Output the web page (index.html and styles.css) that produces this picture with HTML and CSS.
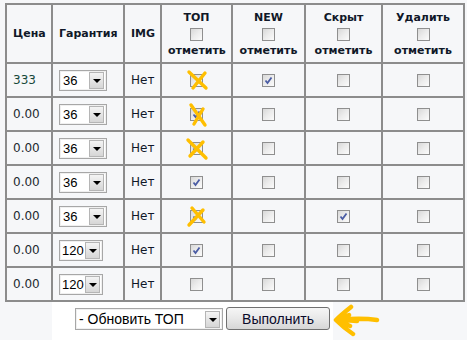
FILE: index.html
```html
<!DOCTYPE html>
<html lang="ru">
<head>
    <meta charset="UTF-8">
    <title>Товары</title>
    <link rel="stylesheet" href="styles.css">
</head>
<body>
    <table class="grid">
        <colgroup>
            <col style="width: 46px">
            <col style="width: 72px">
            <col style="width: 37px">
            <col style="width: 71px">
            <col style="width: 73px">
            <col style="width: 77px">
            <col style="width: 82px">
        </colgroup>
        <thead>
            <tr>
                <th class="left">Цена</th>
                <th class="left">Гарантия</th>
                <th>IMG</th>
                <th><div class="cap">ТОП</div><span class="cb"></span><div class="cap">отметить</div></th>
                <th><div class="cap">NEW</div><span class="cb"></span><div class="cap">отметить</div></th>
                <th><div class="cap">Скрыт</div><span class="cb"></span><div class="cap">отметить</div></th>
                <th><div class="cap">Удалить</div><span class="cb"></span><div class="cap">отметить</div></th>
            </tr>
        </thead>
        <tbody>
            <tr>
                <td class="price first">333</td>
                <td><span class="sel w36"><span class="val">36</span><span class="drop"></span></span></td>
                <td class="mid">Нет</td>
                <td class="mid"><span class="cb"><svg class="cross" viewBox="0 0 24 24"><path d="M3 3 L20 19 M19 4 L7 19"/></svg></span></td>
                <td class="mid"><span class="cb on"><svg class="tick" viewBox="0 0 13 13"><path d="M3.5 6.5 L5.5 9 L9.5 3.5"/></svg></span></td>
                <td class="mid"><span class="cb"></span></td>
                <td class="mid"><span class="cb"></span></td>
            </tr>
            <tr>
                <td class="price">0.00</td>
                <td><span class="sel w36"><span class="val">36</span><span class="drop"></span></span></td>
                <td class="mid">Нет</td>
                <td class="mid"><span class="cb on"><svg class="tick" viewBox="0 0 13 13"><path d="M3.5 6.5 L5.5 9 L9.5 3.5"/></svg><svg class="cross" viewBox="0 0 24 24"><path d="M5 2 L19 22 M17 6 L8 21"/></svg></span></td>
                <td class="mid"><span class="cb"></span></td>
                <td class="mid"><span class="cb"></span></td>
                <td class="mid"><span class="cb"></span></td>
            </tr>
            <tr>
                <td class="price">0.00</td>
                <td><span class="sel w36"><span class="val">36</span><span class="drop"></span></span></td>
                <td class="mid">Нет</td>
                <td class="mid"><span class="cb on"><svg class="tick" viewBox="0 0 13 13"><path d="M3.5 6.5 L5.5 9 L9.5 3.5"/></svg><svg class="cross" viewBox="0 0 24 24"><path d="M2 3 L20 21 M17 5 L4 19"/></svg></span></td>
                <td class="mid"><span class="cb"></span></td>
                <td class="mid"><span class="cb"></span></td>
                <td class="mid"><span class="cb"></span></td>
            </tr>
            <tr>
                <td class="price">0.00</td>
                <td><span class="sel w36"><span class="val">36</span><span class="drop"></span></span></td>
                <td class="mid">Нет</td>
                <td class="mid"><span class="cb on"><svg class="tick" viewBox="0 0 13 13"><path d="M3.5 6.5 L5.5 9 L9.5 3.5"/></svg></span></td>
                <td class="mid"><span class="cb"></span></td>
                <td class="mid"><span class="cb"></span></td>
                <td class="mid"><span class="cb"></span></td>
            </tr>
            <tr>
                <td class="price">0.00</td>
                <td><span class="sel w36"><span class="val">36</span><span class="drop"></span></span></td>
                <td class="mid">Нет</td>
                <td class="mid"><span class="cb on"><svg class="tick" viewBox="0 0 13 13"><path d="M3.5 6.5 L5.5 9 L9.5 3.5"/></svg><svg class="cross" viewBox="0 0 24 24"><path d="M6 3 L18 17 M17 5 L3 20"/></svg></span></td>
                <td class="mid"><span class="cb"></span></td>
                <td class="mid"><span class="cb on"><svg class="tick" viewBox="0 0 13 13"><path d="M3.5 6.5 L5.5 9 L9.5 3.5"/></svg></span></td>
                <td class="mid"><span class="cb"></span></td>
            </tr>
            <tr>
                <td class="price">0.00</td>
                <td><span class="sel w120"><span class="val">120</span><span class="drop"></span></span></td>
                <td class="mid">Нет</td>
                <td class="mid"><span class="cb on"><svg class="tick" viewBox="0 0 13 13"><path d="M3.5 6.5 L5.5 9 L9.5 3.5"/></svg></span></td>
                <td class="mid"><span class="cb"></span></td>
                <td class="mid"><span class="cb"></span></td>
                <td class="mid"><span class="cb"></span></td>
            </tr>
            <tr>
                <td class="price">0.00</td>
                <td><span class="sel w120"><span class="val">120</span><span class="drop"></span></span></td>
                <td class="mid">Нет</td>
                <td class="mid"><span class="cb"></span></td>
                <td class="mid"><span class="cb"></span></td>
                <td class="mid"><span class="cb"></span></td>
                <td class="mid"><span class="cb"></span></td>
            </tr>
        </tbody>
    </table>

    <div class="actions">
        <div class="action-bar">
            <span class="sel wide"><span class="val">- Обновить ТОП</span><span class="drop"></span></span>
            <button class="run">Выполнить</button>
        </div>
        <svg class="arrow" viewBox="0 0 50 40">
            <path d="M4 18 C14 17 30 16 44 18 M18 5 C13 9 7 14 3 18 C8 23 14 28 20 32 M6 17 L16 13 M6 19 L17 24 M10 18 L24 19"/>
        </svg>
    </div>
</body>
</html>
```

FILE: styles.css
```css
body {
    margin: 3px 0 0 5px;
    background-color: #f6f7f9;
    font-family: "DejaVu Sans", Verdana, sans-serif;
    color: #101828;
}
.grid {
    border-collapse: collapse;
    table-layout: fixed;
    width: 459px;
}
.grid th,
.grid td {
    border: 2px solid #8c8c8c;
    padding: 0 6px;
    text-align: center;
    vertical-align: middle;
    font-size: 12px;
}
.grid th {
    font-size: 11px;
    font-weight: bold;
    height: 51px;
    padding-top: 3px;
    padding-bottom: 3px;
    white-space: nowrap;
}
.grid td {
    height: 32px;
}
.grid th.left,
.grid td {
    text-align: left;
}
.grid td.mid {
    text-align: center;
}
.cap {
    line-height: 15px;
}
.price {
    color: #1d2a30;
}
.price.first {
    color: #17483b;
}
.cb {
    position: relative;
    display: inline-block;
    vertical-align: middle;
    width: 11px;
    height: 11px;
    border: 1px solid #8f8f8f;
    background: linear-gradient(135deg, #d8d8d8 0%, #ececec 50%, #fbfbfb 100%);
}
th .cb {
    margin: 3px 0 2px;
}
.tick {
    position: absolute;
    left: -1px;
    top: -1px;
    width: 13px;
    height: 13px;
}
.tick path {
    fill: none;
    stroke: #4a5ca4;
    stroke-width: 1.8;
}
.cross {
    position: absolute;
    left: -5px;
    top: -6px;
    width: 24px;
    height: 24px;
    overflow: visible;
}
.cross path {
    fill: none;
    stroke: #ffbf00;
    stroke-width: 3.4;
    stroke-linecap: round;
}
.sel {
    display: inline-flex;
    align-items: center;
    vertical-align: middle;
    height: 19px;
    border: 1px solid #a7a7a7;
    box-shadow: inset 0 0 0 1px #f0f0f0;
    background: #fff;
    font-family: "Liberation Sans", Arial, sans-serif;
    font-size: 13px;
    color: #000;
    padding: 0 2px 0 3px;
}
.sel .val {
    flex: 1;
    line-height: 19px;
    white-space: nowrap;
}
.sel.w36 {
    width: 41px;
}
.sel.w120 {
    width: 38px;
    padding-left: 2px;
}
.sel.wide {
    width: 141px;
    height: 20px;
    font-size: 14px;
}
.drop {
    position: relative;
    flex: none;
    width: 13px;
    height: 15px;
    border: 1px solid #b5b5b5;
    background: linear-gradient(#f4f4f4, #d6d6d6);
}
.drop::after {
    content: "";
    position: absolute;
    left: 3px;
    top: 6px;
    border-left: 4px solid transparent;
    border-right: 4px solid transparent;
    border-top: 4px solid #000;
}
.actions {
    display: flex;
    align-items: flex-start;
}
.action-bar {
    display: flex;
    align-items: flex-start;
    gap: 3px;
    width: 281px;
    height: 40px;
    margin-left: 47px;
    padding: 6px 0 0 23px;
    box-sizing: border-box;
    background: #fff;
}
.run {
    width: 104px;
    height: 23px;
    margin-top: -1px;
    border: 1px solid #707070;
    border-radius: 3px;
    background: linear-gradient(#f6f6f6 0%, #e8e8e8 50%, #d6d6d6 100%);
    font-family: "Liberation Sans", Arial, sans-serif;
    font-size: 14px;
    color: #0a0a2a;
    padding: 0;
}
.arrow {
    width: 50px;
    height: 40px;
}
.arrow path {
    fill: none;
    stroke: #ffbf00;
    stroke-width: 4.5;
    stroke-linecap: round;
    stroke-linejoin: round;
}
```
